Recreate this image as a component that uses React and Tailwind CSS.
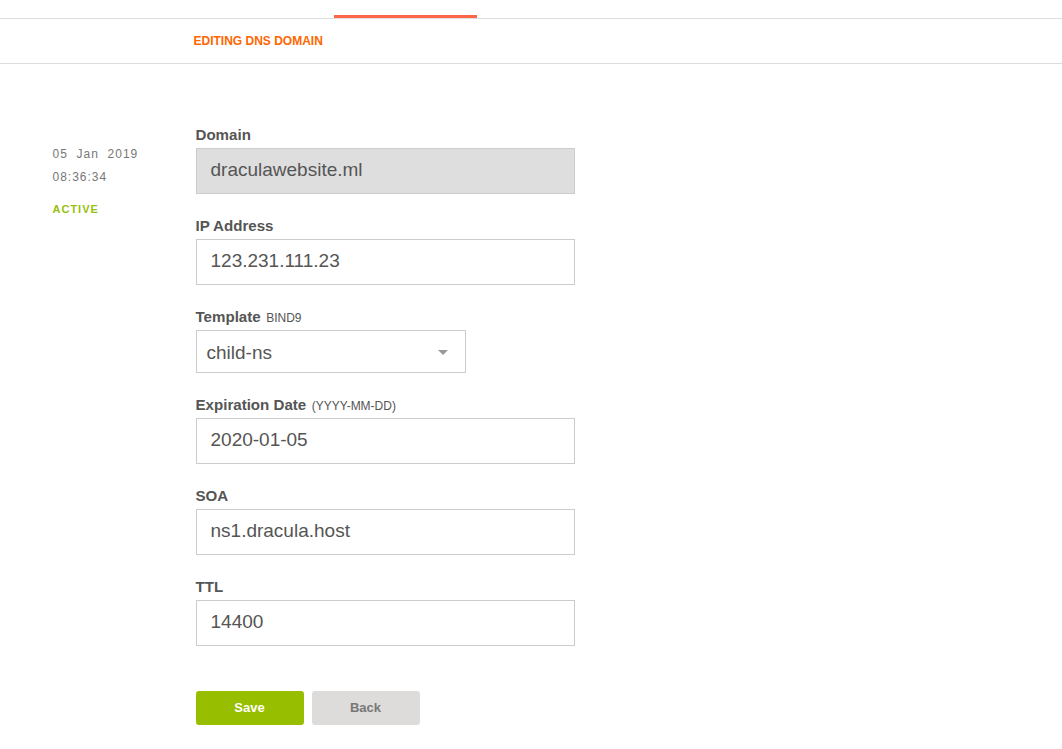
const font = { fontFamily: '"Liberation Sans", Arial, sans-serif' };

function Field({ label, note, noteClass = "", value, disabled }) {
  return (
    <div className="flex flex-col">
      <label className="h-[24px] text-[15.1px] leading-[21px] font-bold text-[#555] whitespace-nowrap">
        {label}
        {note && <span className={`font-normal text-[#555] ${noteClass}`}>{note}</span>}
      </label>
      <input
        readOnly
        value={value}
        className={`w-[379px] h-[46px] border border-[#ccc] px-[14px] pb-[2px] text-[19px] text-[#555] outline-none ${disabled ? "bg-[#dedede]" : "bg-white"}`}
        style={font}
      />
    </div>
  );
}

export default function App() {
  return (
    <div className="min-h-[749px] bg-white overflow-hidden" style={font}>
      <div className="h-[19px] border-b border-[#ddd] pl-[334px] pt-[15px]">
        <div className="w-[143px] h-[3px] bg-[#ff6647]" />
      </div>
      <div className="h-[45px] border-b border-[#ddd] pl-[193.5px] flex items-center">
        <span className="text-[12px] font-bold uppercase text-[#ff6600]">Editing DNS Domain</span>
      </div>
      <div className="flex pt-[59px]">
        <div className="w-[195.5px] pl-[52.5px] pt-[20px] shrink-0">
          <div className="text-[12px] leading-[23px] tracking-[1px] text-[#777] whitespace-pre">05  Jan  2019</div>
          <div className="text-[12px] leading-[23px] tracking-[1px] text-[#777]">08:36:34</div>
          <div className="mt-[12px] text-[11px] leading-[16px] font-bold tracking-[1px] text-[#97bf0d]">ACTIVE</div>
        </div>
        <div className="flex flex-col">
          <div className="pt-[1px]"><Field label="Domain" value="draculawebsite.ml" disabled /></div>
          <div className="mt-[21px]"><Field label="IP Address" value="123.231.111.23" /></div>
          <div className="mt-[21px] flex flex-col">
            <label className="h-[24px] text-[15.1px] leading-[21px] font-bold text-[#555] whitespace-nowrap">
              Template<span className="ml-[5.5px] text-[12px] font-normal text-[#555]">BIND9</span>
            </label>
            <div className="w-[270px] h-[43px] border border-[#ccc] bg-white pl-[10px] pr-[17px] pt-[2px] flex items-center justify-between text-[19px] text-[#555]">
              <span className="pt-[2px]">child-ns</span>
              <span className="w-0 h-0 border-x-[5.5px] border-x-transparent border-t-[5px] border-t-[#999]" />
            </div>
          </div>
          <div className="mt-[21px]"><Field label="Expiration Date" note="(YYYY-MM-DD)" noteClass="ml-[5.5px] text-[12px]" value="2020-01-05" /></div>
          <div className="mt-[21px]"><Field label="SOA" value="ns1.dracula.host" /></div>
          <div className="mt-[21px]"><Field label="TTL" value="14400" /></div>
          <div className="mt-[45px] flex gap-[8px]">
            <button className="w-[108px] h-[34px] rounded-[3px] bg-[#97bf00] text-white text-[13px] font-bold">Save</button>
            <button className="w-[108px] h-[34px] rounded-[3px] bg-[#dddcdb] text-[#777] text-[13px] font-bold">Back</button>
          </div>
        </div>
      </div>
    </div>
  );
}
